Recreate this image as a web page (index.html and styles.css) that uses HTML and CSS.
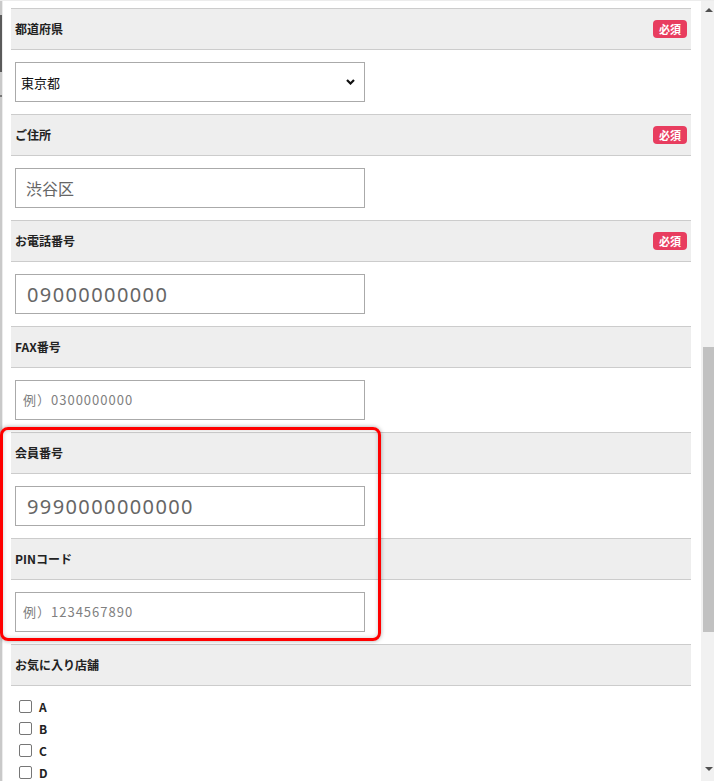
FILE: index.html
```html
<!DOCTYPE html>
<html lang="ja">
<head>
<meta charset="utf-8">
<title>会員情報</title>
<link rel="stylesheet" href="styles.css">
</head>
<body>
<div class="window">
  <div class="edge"><span class="edge-mark"></span><span class="edge-tick"></span></div>
  <main class="form">
    <section class="field">
      <div class="field-head"><span class="label">都道府県</span><span class="req">必須</span></div>
      <div class="field-body">
        <div class="select-wrap">
          <select class="select">
            <option>東京都</option>
          </select>
          <svg class="chev" width="9" height="6" viewBox="0 0 9 6"><path d="M1 1 L4.5 4.5 L8 1" fill="none" stroke="#111" stroke-width="2.2"/></svg>
        </div>
      </div>
    </section>
    <section class="field">
      <div class="field-head"><span class="label">ご住所</span><span class="req">必須</span></div>
      <div class="field-body">
        <input class="input input-addr" type="text" value="渋谷区">
      </div>
    </section>
    <section class="field">
      <div class="field-head"><span class="label">お電話番号</span><span class="req">必須</span></div>
      <div class="field-body">
        <input class="input input-num" type="text" value="09000000000">
      </div>
    </section>
    <section class="field">
      <div class="field-head"><span class="label">FAX番号</span></div>
      <div class="field-body">
        <input class="input input-ph" type="text" placeholder="例）0300000000">
      </div>
    </section>
    <section class="field">
      <div class="field-head"><span class="label">会員番号</span></div>
      <div class="field-body">
        <input class="input input-num" type="text" value="9990000000000">
      </div>
    </section>
    <section class="field">
      <div class="field-head"><span class="label">PINコード</span></div>
      <div class="field-body">
        <input class="input input-ph" type="text" placeholder="例）1234567890">
      </div>
    </section>
    <section class="field">
      <div class="field-head"><span class="label">お気に入り店舗</span></div>
      <div class="check-list">
        <label class="check"><input type="checkbox" class="box"><span>A</span></label>
        <label class="check"><input type="checkbox" class="box"><span>B</span></label>
        <label class="check"><input type="checkbox" class="box"><span>C</span></label>
        <label class="check"><input type="checkbox" class="box"><span>D</span></label>
      </div>
    </section>
  </main>
  <div class="scrollbar">
    <div class="sb-btn"><span class="tri-up"></span></div>
    <div class="sb-track"><div class="sb-thumb"></div></div>
    <div class="sb-btn sb-btn-down"><span class="tri-down"></span></div>
  </div>
  <div class="highlight"></div>
</div>
</body>
</html>
```

FILE: styles.css
```css
html, body {
  margin: 0;
  padding: 0;
  height: 781px;
  overflow: hidden;
  background: #ffffff;
}

body {
  font-family: "Noto Sans CJK JP", "Noto Sans", sans-serif;
  color: #222;
}

.window {
  position: relative;
  display: flex;
  height: 780px;
  border-top: 1px solid #ececec;
  background: #ffffff;
}

.edge {
  position: relative;
  width: 3px;
  flex: none;
  background: linear-gradient(to right, #c9c9c9 0, #c9c9c9 2px, #ececec 2px);
}

.edge-mark {
  position: absolute;
  left: 0;
  top: 14px;
  width: 2px;
  height: 57px;
  background: #5a5a5a;
}

.edge-tick {
  position: absolute;
  left: 0;
  top: 94px;
  width: 2px;
  height: 2px;
  background: #777;
}

.form {
  flex: none;
  width: 680px;
  margin-left: 8px;
  padding-top: 7px;
}

.field-head {
  display: flex;
  align-items: center;
  justify-content: space-between;
  height: 40px;
  padding: 0 4px;
  background: #eeeeee;
  border-top: 1px solid #cccccc;
  border-bottom: 1px solid #cccccc;
}

.label {
  font-size: 12px;
  font-weight: 700;
  color: #222;
  line-height: 1;
}

.req {
  display: flex;
  align-items: center;
  justify-content: center;
  width: 34px;
  height: 18px;
  border-radius: 4px;
  background: #e83d5f;
  color: #ffffff;
  font-size: 11px;
  font-weight: 700;
  line-height: 1;
}

.field-body {
  padding: 12px 0 12px 4px;
}

.select-wrap {
  position: relative;
  width: 350px;
  height: 40px;
}

.select {
  appearance: none;
  -webkit-appearance: none;
  width: 350px;
  height: 40px;
  margin: 0;
  padding: 0 24px 0 5px;
  border: 1px solid #aaaaaa;
  border-radius: 0;
  background: #ffffff;
  font-family: "Noto Sans CJK JP", sans-serif;
  font-size: 13px;
  color: #111;
  box-sizing: border-box;
}

.chev {
  position: absolute;
  right: 10px;
  top: 17px;
}

.input {
  display: block;
  width: 350px;
  height: 40px;
  margin: 0;
  border: 1px solid #aaaaaa;
  border-radius: 0;
  box-sizing: border-box;
  background: #ffffff;
  outline: none;
}

.input-addr {
  padding: 0 10px;
  font-family: "Noto Sans CJK JP", sans-serif;
  font-size: 16px;
  color: #666;
}

.input-num {
  padding: 0 11px;
  font-family: "Noto Sans", "Open Sans", sans-serif;
  font-size: 20px;
  letter-spacing: 1.4px;
  color: #666;
}

.input-ph {
  padding: 0 7px;
  font-family: "Noto Sans", "Noto Sans CJK JP", sans-serif;
  font-size: 13px;
  letter-spacing: 1px;
}

.input-ph::placeholder {
  color: #808080;
  font-family: "Noto Sans CJK JP", sans-serif;
}

.check-list {
  display: flex;
  flex-direction: column;
  padding: 9px 0 0 8px;
}

.check {
  display: flex;
  align-items: center;
  height: 22px;
  font-size: 12px;
  font-weight: 700;
  color: #222;
}

.box {
  appearance: none;
  -webkit-appearance: none;
  width: 13px;
  height: 13px;
  margin: 0 7px 0 0;
  border: 1px solid #767676;
  border-radius: 2px;
  background: #ffffff;
  box-sizing: border-box;
}

.scrollbar {
  flex: none;
  display: flex;
  flex-direction: column;
  width: 13px;
  margin-left: 10px;
  background: #f1f1f1;
}

.sb-btn {
  height: 17px;
  display: flex;
  align-items: center;
  justify-content: center;
  padding-left: 3px;
}

.sb-btn-down {
  height: 16px;
  align-items: flex-start;
  padding-top: 2px;
  box-sizing: border-box;
}

.tri-up {
  width: 0;
  height: 0;
  border-left: 4px solid transparent;
  border-right: 4px solid transparent;
  border-bottom: 4px solid #505050;
}

.tri-down {
  width: 0;
  height: 0;
  border-left: 4px solid transparent;
  border-right: 4px solid transparent;
  border-top: 4px solid #505050;
}

.sb-track {
  flex: 1;
}

.sb-thumb {
  margin-top: 329px;
  margin-left: 2px;
  height: 285px;
  background: #c1c1c1;
}

.highlight {
  position: absolute;
  left: 0;
  top: 426px;
  width: 381px;
  height: 214px;
  box-sizing: border-box;
  border: 3px solid #ff0000;
  border-radius: 8px;
  box-shadow: 0 0 4px rgba(0, 0, 0, 0.35), inset 0 0 4px rgba(0, 0, 0, 0.2);
  pointer-events: none;
}
```
